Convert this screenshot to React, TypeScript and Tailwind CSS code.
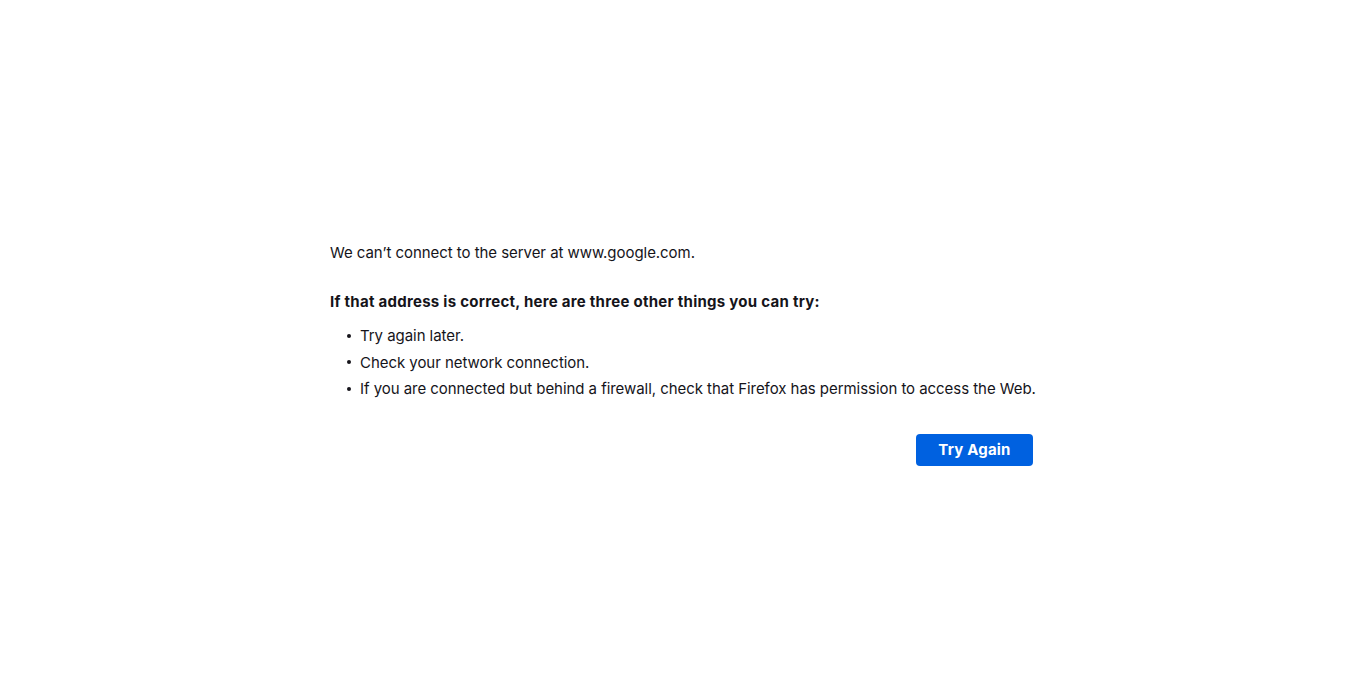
export default function App() {
  const items = [
    'Try again later.',
    'Check your network connection.',
    'If you are connected but behind a firewall, check that Firefox has permission to access the Web.',
  ];
  return (
    <div className="min-h-[683px] w-full bg-white text-[#15141a] text-[15px]" style={{ fontFamily: 'Inter, "Noto Sans", sans-serif' }}>
      <div className="mx-auto w-[706px] pt-[242px]">
        <p className="leading-[21px] tracking-[-0.05px]">We can’t connect to the server at www.google.com.</p>
        <p className="mt-[28px] font-bold leading-[21px] tracking-[0.27px]">If that address is correct, here are three other things you can try:</p>
        <ul className="mt-[13px] flex flex-col gap-[5.5px]">
          {items.map((t) => (
            <li key={t} className="flex items-center leading-[21px] whitespace-nowrap tracking-[-0.05px]">
              <span className="ml-[17px] mr-[9px] h-[4px] w-[4px] rounded-full bg-[#15141a]" />
              {t}
            </li>
          ))}
        </ul>
        <div className="mt-[35px] flex justify-end pr-[3px]">
          <button className="h-[32px] w-[117px] rounded-[4px] bg-[#0061e0] text-white font-bold text-[15px] tracking-[0.2px]">Try Again</button>
        </div>
      </div>
    </div>
  );
}
